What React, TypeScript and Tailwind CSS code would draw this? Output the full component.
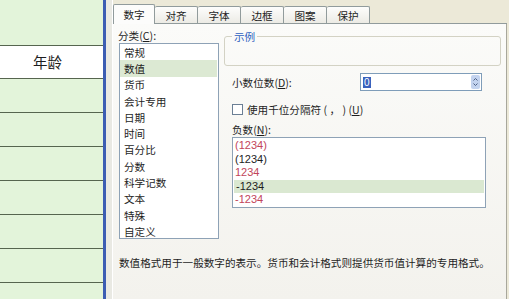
import React from 'react';

const categories = ['常规', '数值', '货币', '会计专用', '日期', '时间', '百分比', '分数', '科学记数', '文本', '特殊', '自定义'];

const negatives = [
  { text: '(1234)', red: true },
  { text: '(1234)', red: false },
  { text: '1234', red: true },
  { text: '-1234', red: false, selected: true },
  { text: '-1234', red: true },
];

const tabs = ['对齐', '字体', '边框', '图案', '保护'];

function Key({ k }: { k: string }) {
  return (
    <span>
      (<span className="underline">{k}</span>)
    </span>
  );
}

export default function App() {
  return (
    <div
      className="w-[509px] h-[299px] flex overflow-hidden bg-[#ece9d8] text-[#1e1e1e]"
      style={{ fontFamily: '"Noto Sans CJK SC", "Liberation Sans", sans-serif' }}
    >
      {/* sheet column */}
      <div className="w-[103px] h-full flex flex-col bg-[#e3f4da]">
        <div className="h-[46px] shrink-0 border-b border-[#56654f]" />
        <div className="h-[33px] shrink-0 border-b border-[#56654f] bg-white flex items-center justify-center pr-[8px] text-[14.5px]">
          年龄
        </div>
        {[0, 1, 2, 3, 4, 5].map((i) => (
          <div key={i} className="h-[34px] shrink-0 border-b border-[#56654f]" />
        ))}
      </div>
      <div className="w-[3px] h-full bg-[#3c5db3]" />
      <div className="w-[6px] h-full bg-[#e9e9e3]" />

      {/* dialog */}
      <div className="flex-1 h-full flex flex-col border-l border-white pr-[2px] text-[10.6px] leading-[13px]">
        {/* tabs */}
        <div className="h-[24px] shrink-0 flex items-end border-b border-[#919b9c]">
          <div className="relative z-10 -mb-px w-[42px] h-[20px] flex items-center justify-center bg-[#fcfcfb] border-x border-t border-[#919b9c] rounded-t-[2px]">
            数字
          </div>
          {tabs.map((t) => (
            <div
              key={t}
              className="w-[43px] h-[17px] flex items-center justify-center border-t border-r border-[#919b9c] rounded-t-[2px] bg-gradient-to-b from-[#fdfdfc] to-[#ecebe5]"
            >
              {t}
            </div>
          ))}
        </div>

        {/* panel */}
        <div className="flex-1 flex flex-col bg-gradient-to-b from-[#fbfbf9] to-[#f3f2ed] border-r border-[#a8a79c]">
          <div className="flex pt-[5px]">
            {/* category list */}
            <div className="w-[106px] pl-[6px] shrink-0">
              <div className="h-[14px] -ml-px">
                分类<Key k="C" />:
              </div>
              <div className="w-[100px] h-[196px] border border-[#8ea2b6] bg-white flex flex-col">
                {categories.map((c, i) => (
                  <div
                    key={c}
                    className={`h-[16.3px] shrink-0 flex items-center pl-[4px] ${i === 1 ? 'bg-[#dce9d3] mr-[1px]' : ''}`}
                  >
                    {c}
                  </div>
                ))}
              </div>
            </div>

            {/* right side */}
            <div className="w-[277px] ml-[5px] pt-[7px]">
              <div className="relative h-[30px] border border-[#d3d2c4] rounded-[3px]">
                <span className="absolute -top-[7px] left-[7px] px-[2px] bg-[#fafaf8] text-[#2d5fc0] leading-[13px]">
                  示例
                </span>
              </div>

              <div className="mt-[7px] h-[18px] flex items-center pl-[8px]">
                <div className="w-[128px]">
                  小数位数<Key k="D" />:
                </div>
                <div className="w-[122px] h-[18px] border border-[#7f9db9] bg-white flex items-center">
                  <span className="ml-[2px] px-[1px] bg-[#3a62bd] text-white leading-[11px] text-[10px]" style={{ fontFamily: '"Liberation Sans", sans-serif' }}>
                    0
                  </span>
                  <div className="ml-auto mr-[1px] w-[9px] h-[14px] rounded-[2px] bg-[#c3d3ef] flex flex-col items-center justify-center gap-[2px]">
                    <svg width="5" height="3" viewBox="0 0 5 3">
                      <path d="M0.5 2.5 L2.5 0.5 L4.5 2.5" stroke="#4d6185" strokeWidth="1" fill="none" />
                    </svg>
                    <svg width="5" height="3" viewBox="0 0 5 3">
                      <path d="M0.5 0.5 L2.5 2.5 L4.5 0.5" stroke="#4d6185" strokeWidth="1" fill="none" />
                    </svg>
                  </div>
                </div>
              </div>

              <div className="mt-[13px] h-[11px] flex items-center pl-[8px]">
                <div className="w-[11px] h-[11px] border border-[#6b7f95] bg-white shrink-0" />
                <span className="ml-[4px]">
                  使用千位分隔符 ( ， ) <Key k="U" />
                </span>
              </div>

              <div className="mt-[8px] h-[13px] pl-[8px]">
                负数<Key k="N" />:
              </div>
              <div
                className="mt-[1px] ml-[8px] w-[254px] h-[71px] border border-[#8ea2b6] bg-white pt-[1px]"
                style={{ fontFamily: '"Liberation Sans", "Noto Sans CJK SC", sans-serif' }}
              >
                {negatives.map((n, i) => (
                  <div
                    key={i}
                    className={`h-[13.5px] flex items-center pl-[2px] text-[11px] ${n.red ? 'text-[#c2455a]' : 'text-[#1e1e1e]'} ${n.selected ? 'bg-[#dae8d1] mx-[1px] pl-[1px]' : ''}`}
                  >
                    {n.text}
                  </div>
                ))}
              </div>
            </div>
          </div>

          <div className="mt-[17px] pl-[6px] whitespace-nowrap">
            数值格式用于一般数字的表示。货币和会计格式则提供货币值计算的专用格式。
          </div>
        </div>
      </div>
    </div>
  );
}
